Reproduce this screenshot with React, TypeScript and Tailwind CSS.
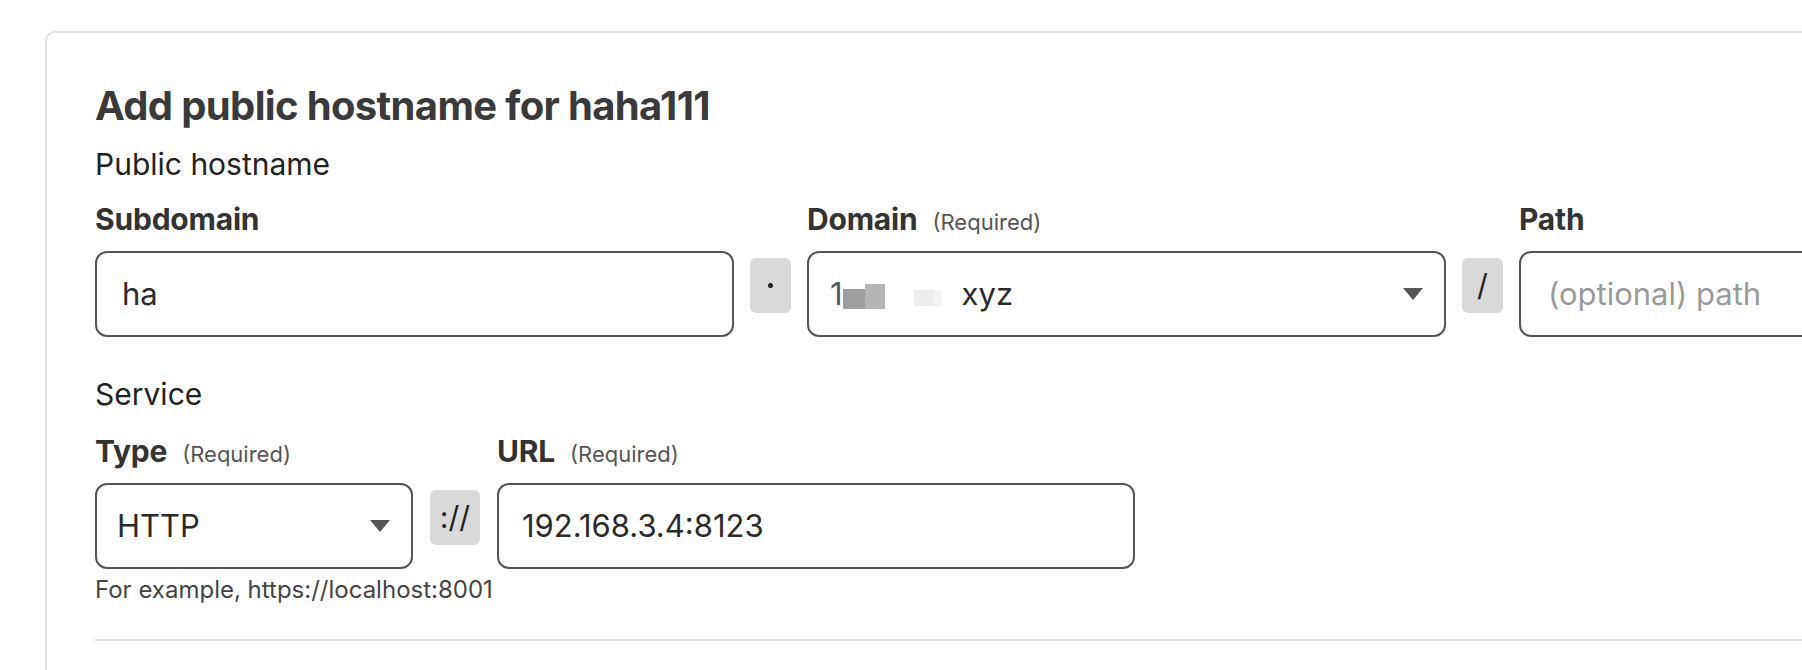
import React from "react";

const font = { fontFamily: "Inter, 'Noto Sans', 'Liberation Sans', sans-serif" };

function Label({ text, required }: { text: string; required?: boolean }) {
  return (
    <div className="flex items-baseline h-[36px] leading-[36px]">
      <span className="text-[30px] font-bold text-[#333333] tracking-[-0.2px]">{text}</span>
      {required && (
        <span className="ml-[15px] text-[22px] text-[#555555]">(Required)</span>
      )}
    </div>
  );
}

function Caret() {
  return (
    <svg width="20" height="12" viewBox="0 0 20 12" className="shrink-0">
      <path d="M0 0 H20 L10 12 Z" fill="#555555" />
    </svg>
  );
}

function Sep({ children }: { children: React.ReactNode }) {
  return (
    <div className="mt-[7px] h-[55px] rounded-[6px] bg-[#d9d9d9] flex items-center justify-center text-[30px] text-[#222222]">
      {children}
    </div>
  );
}

const inputCls =
  "h-[86px] rounded-[12px] border-2 border-[#555555] bg-white flex items-center text-[31px] text-[#2b2b2b]";

export default function App() {
  return (
    <div className="w-[1802px] h-[670px] overflow-hidden bg-white" style={font}>
      <div className="ml-[45px] mt-[31px] w-[2400px] h-[800px] rounded-[10px] border-2 border-[#e2e2e2] bg-white shadow-[0_0_6px_rgba(0,0,0,0.06)] pl-[48px] pt-[49px]">
        <h1 className="text-[40px] leading-[48px] font-bold text-[#3a3a3a] tracking-[-0.65px]">
          Add public hostname for haha111
        </h1>

        {/* public hostname */}
        <div className="mt-[16px] text-[30px] leading-[36px] text-[#222222]">Public hostname</div>
        <div className="mt-[19px] grid grid-cols-[639px_41px_639px_41px_639px] gap-x-[16px] gap-y-[14px]">
          <Label text="Subdomain" />
          <div />
          <Label text="Domain" required />
          <div />
          <Label text="Path" />

          <div className={`${inputCls} pl-[25px]`}>ha</div>
          <Sep>
            <span className="block w-[5px] h-[5px] rounded-full bg-[#222222]" />
          </Sep>
          <div className={`${inputCls} pl-[21px] pr-[21px] justify-between`}>
            <div className="flex items-center">
              <span className="text-[#555555]">1</span>
              <div className="flex items-end h-[26px] mt-[4px]">
                <span className="block w-[22px] h-[20px] bg-[#9e9e9e]" />
                <span className="block w-[20px] h-[25px] bg-[#b4b4b4]" />
                <span className="block w-[29px] h-[25px]" />
                <span className="block w-[20px] h-[16px] mb-[3px] bg-[#ececec]" />
                <span className="block w-[8px] h-[16px] mb-[3px] bg-[#f4f4f4]" />
                <span className="block w-[20px] h-[20px]" />
              </div>
              <span>xyz</span>
            </div>
            <Caret />
          </div>
          <Sep>/</Sep>
          <div className={`${inputCls} pl-[27px] text-[#9a9a9a]`}>(optional) path</div>
        </div>

        {/* service */}
        <div className="mt-[39px] text-[30px] leading-[36px] text-[#222222]">Service</div>
        <div className="mt-[21px] grid grid-cols-[318px_50px_638px] gap-x-[17px] gap-y-[14px]">
          <Label text="Type" required />
          <div />
          <Label text="URL" required />

          <div className={`${inputCls} pl-[20px] pr-[21px] justify-between`}>
            <span>HTTP</span>
            <Caret />
          </div>
          <Sep>://</Sep>
          <div className={`${inputCls} pl-[23px]`}>192.168.3.4:8123</div>
        </div>
        <div className="mt-[7px] text-[24px] leading-[28px] text-[#444444]">
          For example, https://localhost:8001
        </div>

        <div className="mt-[35px] h-[2px] bg-[#dddddd]" />
      </div>
    </div>
  );
}
